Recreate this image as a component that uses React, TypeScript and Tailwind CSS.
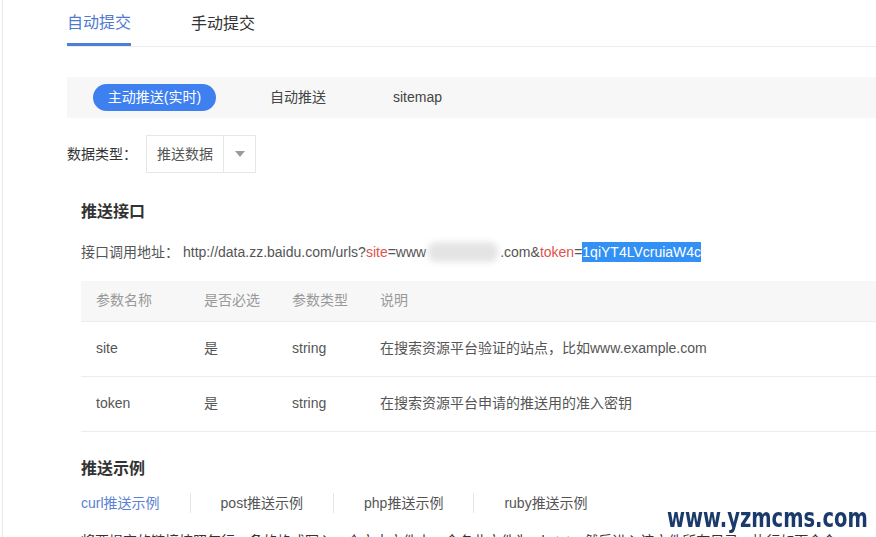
const font = { fontFamily: '"Liberation Sans", "Noto Sans CJK SC", sans-serif' }

const params = [
  { name: 'site', required: '是', type: 'string', desc: '在搜索资源平台验证的站点，比如www.example.com' },
  { name: 'token', required: '是', type: 'string', desc: '在搜索资源平台申请的推送用的准入密钥' },
]

const examples = ['curl推送示例', 'post推送示例', 'php推送示例', 'ruby推送示例']

export default function App() {
  return (
    <div className="relative h-[537px] w-[876px] overflow-hidden bg-white" style={font}>
      <div className="ml-[2px] min-h-[537px] border-l border-[#e8e8e8] pl-[64px]">
        {/* top tabs */}
        <div className="flex h-[47px] w-[900px] border-b border-[#ececec]">
          <div className="flex h-[46px] items-center border-b-[3px] border-[#4d7fd6] pt-[2px] text-[16px] text-[#4f7bcf]">
            自动提交
          </div>
          <div className="ml-[60px] flex h-[46px] items-center pt-[2px] text-[16px] text-[#333]">
            手动提交
          </div>
        </div>

        {/* push mode bar */}
        <div className="mt-[30px] flex h-[41px] w-[900px] items-center bg-[#f7f7f7] pl-[26px] text-[14px]">
          <div className="flex h-[27px] w-[123px] items-center justify-center rounded-full bg-[#3f80f0] text-white">
            主动推送(实时)
          </div>
          <div className="ml-[54px] text-[#444]">自动推送</div>
          <div className="ml-[67px] text-[#444]">sitemap</div>
        </div>

        {/* data type */}
        <div className="mt-[17px] flex items-center text-[14px]">
          <span className="text-[#333]">数据类型：</span>
          <div className="ml-[9px] flex h-[38px] w-[110px] items-center border border-[#e6e6e6]">
            <span className="w-[76px] pl-[10px] leading-[36px] text-[#555]">推送数据</span>
            <div className="flex h-full flex-1 items-center justify-center border-l border-[#e6e6e6]">
              <svg width="10" height="6" viewBox="0 0 10 6">
                <path d="M0 0h10L5 6z" fill="#9a9a9a" />
              </svg>
            </div>
          </div>
        </div>

        <div className="pl-[14px]">
          <h2 className="mt-[27px] text-[16px] font-bold leading-[24px] text-[#333]">推送接口</h2>

          <div className="mt-[18px] flex items-center whitespace-nowrap text-[14px] leading-[20px] text-[#555]">
            <span>接口调用地址：</span>
            <span className="ml-[4px]">http://data.zz.baidu.com/urls?</span>
            <span className="text-[#e0534c]">site</span>
            <span>=www</span>
            <span className="mx-[2px] inline-block h-[20px] w-[70px] rounded-[8px] bg-[#e4e4e4] blur-[3px]" />
            <span>.com&amp;</span>
            <span className="text-[#e0534c]">token</span>
            <span>=</span>
            <span className="bg-[#3390f5] text-white">1qiYT4LVcruiaW4c</span>
          </div>

          {/* params table */}
          <table className="mt-[19px] w-[900px] table-fixed border-collapse text-[14px]">
            <colgroup>
              <col className="w-[123px]" />
              <col className="w-[88px]" />
              <col className="w-[88px]" />
              <col />
            </colgroup>
            <thead>
              <tr className="h-[40px] bg-[#f7f7f7] text-left text-[#999]">
                <th className="pl-[15px] font-normal">参数名称</th>
                <th className="font-normal">是否必选</th>
                <th className="font-normal">参数类型</th>
                <th className="font-normal">说明</th>
              </tr>
            </thead>
            <tbody>
              {params.map((p) => (
                <tr key={p.name} className="h-[55px] border-b border-t border-[#ececec] text-[#555]">
                  <td className="pl-[15px]">{p.name}</td>
                  <td>{p.required}</td>
                  <td>{p.type}</td>
                  <td>{p.desc}</td>
                </tr>
              ))}
            </tbody>
          </table>

          <h2 className="mt-[25px] text-[16px] font-bold leading-[24px] text-[#333]">推送示例</h2>

          <div className="mt-[12px] flex items-center text-[14px] leading-[20px]">
            {examples.map((e, i) => (
              <div
                key={e}
                className={
                  i === 0
                    ? 'border-r border-[#e6e6e6] pr-[30px] text-[#5a82d2]'
                    : i === examples.length - 1
                      ? 'pl-[30px] text-[#555]'
                      : 'border-r border-[#e6e6e6] px-[30px] text-[#555]'
                }
              >
                {e}
              </div>
            ))}
          </div>

          <p className="mt-[18px] whitespace-nowrap text-[14px] leading-[20px] text-[#333]">
            将要提交的链接按照每行一条的格式写入一个文本文件中，命名此文件为urls.txt，然后进入该文件所在目录，执行如下命令：
          </p>
        </div>
      </div>

      {/* watermark */}
      <div
        className="absolute left-[667px] top-[509px] origin-center scale-y-[1.4] text-[19.5px] font-bold leading-[20px] text-[#1b3a6c]"
        style={{ fontFamily: '"DejaVu Sans", sans-serif' }}
      >
        www.yzmcms.com
      </div>
    </div>
  )
}
